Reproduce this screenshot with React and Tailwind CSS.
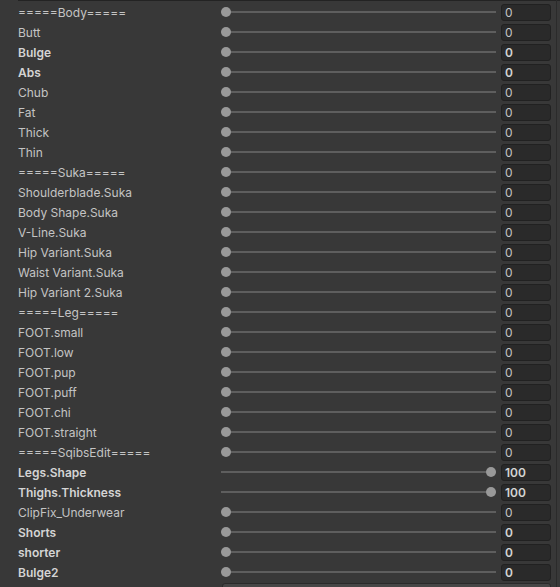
const rows = [
  ['=====Body=====', 0, false],
  ['Butt', 0, false],
  ['Bulge', 0, true],
  ['Abs', 0, true],
  ['Chub', 0, false],
  ['Fat', 0, false],
  ['Thick', 0, false],
  ['Thin', 0, false],
  ['=====Suka=====', 0, false],
  ['Shoulderblade.Suka', 0, false],
  ['Body Shape.Suka', 0, false],
  ['V-Line.Suka', 0, false],
  ['Hip Variant.Suka', 0, false],
  ['Waist Variant.Suka', 0, false],
  ['Hip Variant 2.Suka', 0, false],
  ['=====Leg=====', 0, false],
  ['FOOT.small', 0, false],
  ['FOOT.low', 0, false],
  ['FOOT.pup', 0, false],
  ['FOOT.puff', 0, false],
  ['FOOT.chi', 0, false],
  ['FOOT.straight', 0, false],
  ['=====SqibsEdit=====', 0, false],
  ['Legs.Shape', 100, true],
  ['Thighs.Thickness', 100, true],
  ['ClipFix_Underwear', 0, false],
  ['Shorts', 0, true],
  ['shorter', 0, true],
  ['Bulge2', 0, true],
];

function Slider({ value }) {
  return (
    <div className="relative h-5 w-[275px] shrink-0">
      <div className="absolute left-0 right-0 top-[9px] h-[2px] bg-[#5e5e5e]" />
      <div
        className="absolute top-[5px] h-[10px] w-[10px] rounded-full bg-[#999999]"
        style={{ left: value >= 100 ? 265 : 0 }}
      />
    </div>
  );
}

function Row({ label, value, bold }) {
  return (
    <div className="flex h-5 items-center">
      <div className={`w-[221px] shrink-0 truncate pl-[18px] pt-px ${bold ? 'font-semibold text-[#d4d4d4]' : 'text-[#c4c4c4]'}`}>
        {label}
      </div>
      <Slider value={value} />
      <div className="ml-[5px] flex h-[17px] w-[50px] shrink-0 items-center rounded-[3px] border border-[#212121] bg-[#2a2a2a] pl-[3px] pt-px">
        <span className={bold ? 'font-semibold text-[#d4d4d4]' : 'text-[#c4c4c4]'}>{value}</span>
      </div>
    </div>
  );
}

export default function App() {
  return (
    <div
      className="relative h-[587px] w-[560px] overflow-hidden bg-[#383838] text-[12px]"
      style={{ fontFamily: 'Inter, "Liberation Sans", sans-serif' }}
    >
      <div className="ml-[18px] h-px bg-[#232323]" />
      <div className="pt-px">
        {rows.map(([label, value, bold]) => (
          <Row key={label} label={label} value={value} bold={bold} />
        ))}
      </div>
      <div className="ml-[222px] mt-px h-4 w-[329px] rounded-t-[3px] border border-[#2a2a2a] bg-[#464646]" />
      <div className="absolute right-[3px] top-0 h-full w-px bg-[#2b2b2b]" />
    </div>
  );
}
